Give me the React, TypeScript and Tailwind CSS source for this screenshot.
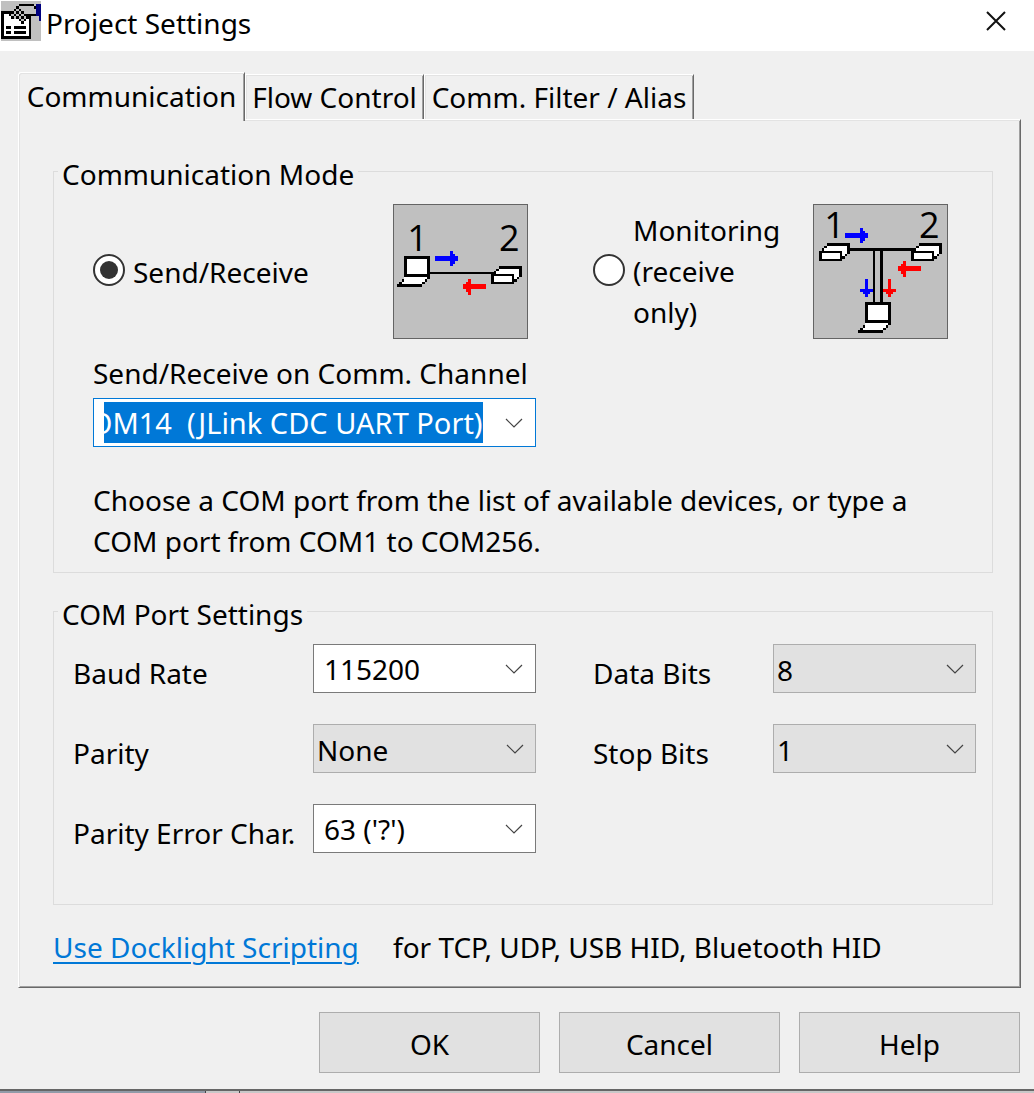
import { useEffect, useRef, type ReactNode } from "react";

function Chevron() {
  return (
    <svg viewBox="0 0 18 10" className="h-[10px] w-[18px]" fill="none" stroke="#444" strokeWidth="1.2" aria-hidden="true">
      <path d="M1 1l8 8 8-8" />
    </svg>
  );
}

function Device({ x, y }: { x: number; y: number }) {
  return (
    <g transform={`translate(${x} ${y})`}>
      <path
        fill="#000"
        d="M24 0H93V32H85V39H78V47H70V54H0V23H9V16H16V8H24Z"
      />
      <path fill="#fff" d="M24 8H85V16H78V23H16V16H24Z" />
      <path fill="#fff" d="M9 31H63V47H9Z" />
      <path fill="#fff" d="M78 16H85V32H78V39H70V23H78Z" />
    </g>
  );
}

function Laptop({ x, y }: { x: number; y: number }) {
  return (
    <g transform={`translate(${x} ${y})`}>
      <path fill="#000" d="M21 0H99V68H91V77H83V84H76V92H0V84H6V77H14V69H21Z" />
      <path fill="#fff" d="M29 8H91V54H29Z" />
      <path fill="#fff" d="M21 63H91V69H83V77H75V84H14V77H21Z" />
    </g>
  );
}

const RIGHT_ARROW = "M0 15H45V0H53V8H61V15H69V30H61V38H53V45H45V30H0Z";
const LEFT_ARROW = "M69 15H23V0H15V8H8V15H0V30H8V39H15V47H23V30H69Z";
const DOWN_ARROW = "M15 0H23V31H38V38H31V46H23V53H15V46H8V38H0V31H15Z";

function Picture({ label, children }: { label: string; children: ReactNode }) {
  return (
    <svg
      role="img"
      aria-label={label}
      viewBox="27 30 399 399"
      className="size-[135px] shrink-0 overflow-visible border border-[#646464] bg-[#c0c0c0] font-['Open_Sans',sans-serif]"
      shapeRendering="crispEdges"
    >
      {children}
    </svg>
  );
}

function SendReceivePicture() {
  return (
    <Picture label="Device 1 and device 2 connected directly">
      <text x="67" y="168" fontSize="108">1</text>
      <text x="342" y="168" fontSize="108">2</text>
      <path d="M130 231H330V237H130Z" />
      <Laptop x={36} y={183} />
      <Device x={318} y={213} />
      <path fill="#00f" transform="translate(150 168)" d={RIGHT_ARROW} />
      <path fill="#f00" transform="translate(234 252)" d={LEFT_ARROW} />
    </Picture>
  );
}

function MonitoringPicture() {
  return (
    <Picture label="Monitoring the line between device 1 and device 2">
      <text x="58" y="130" fontSize="108">1</text>
      <text x="342" y="130" fontSize="108">2</text>
      <path d="M130 159H330V167H234V325H225V167H210V325H204V167H130Z" />
      <Device x={42} y={144} />
      <Device x={318} y={144} />
      <Laptop x={159} y={321} />
      <path fill="#00f" transform="translate(120 99)" d={RIGHT_ARROW} />
      <path fill="#f00" transform="translate(279 198)" d={LEFT_ARROW} />
      <path fill="#00f" transform="translate(165 252)" d={DOWN_ARROW} />
      <path fill="#f00" transform="translate(234 252)" d={DOWN_ARROW} />
    </Picture>
  );
}

function AppIcon() {
  return (
    <svg viewBox="0 0 16 16" className="size-10 shrink-0" shapeRendering="crispEdges" aria-hidden="true">
      <path fill="#c0c0c0" d="M0 0H16V16H0Z" />
      <path fill="#000" d="M0 4H12V15H0Z" />
      <path fill="#fff" d="M1 5H11V14H1Z" />
      <path fill="#000" d="M2 10H4V11H2ZM5 10H10V11H5ZM2 12H4V13H2ZM5 12H10V13H5Z" />
      <path fill="#c0c0c0" d="M7 2H14V5H11V6H10V8H9V9H8V8H7V7H4V6H3V5H5V4H6V3H7Z" />
      <path
        fill="#000"
        d="M7 1H13V2H7ZM13 2H14V3H13ZM6 2H7V3H6ZM5 3H6V4H5ZM7 3H8V4H7ZM4 4H5V5H4ZM6 4H7V5H6ZM8 4H9V5H8ZM3 5H4V6H3ZM5 5H6V6H5ZM7 5H8V6H7ZM9 5H14V6H9ZM4 6H5V7H4ZM6 6H7V7H6ZM8 6H9V7H8ZM10 6H11V7H10ZM7 7H8V8H7ZM9 7H10V8H9ZM8 8H9V9H8Z"
      />
      <path fill="#000080" d="M14 1H16V8H15V6H14Z" />
    </svg>
  );
}

function ComboBox({ id, value, options }: { id: string; value: string; options: string[] }) {
  return (
    <div className="flex h-[49px] min-w-0 items-center border border-[#7a7a7a] bg-white pr-3 pl-[10px]">
      <input
        id={id}
        list={`${id}-options`}
        defaultValue={value}
        className="h-10 w-full min-w-0 flex-1 leading-10 outline-none [&::-webkit-calendar-picker-indicator]:hidden!"
      />
      <datalist id={`${id}-options`}>
        {options.map((o) => (
          <option key={o} value={o} />
        ))}
      </datalist>
      <button type="button" aria-label="Open list">
        <Chevron />
      </button>
    </div>
  );
}

function DropDown({ id, options }: { id: string; options: string[] }) {
  return (
    <div className="relative min-w-0">
      <select id={id} className="h-[49px] w-full appearance-none border border-[#adadad] bg-[#e1e1e1] pt-[2px] pr-10 pl-[3px] outline-none">
        {options.map((o) => (
          <option key={o}>{o}</option>
        ))}
      </select>
      <span className="pointer-events-none absolute inset-y-0 right-3 flex items-center">
        <Chevron />
      </span>
    </div>
  );
}

function Radio({ id, checked }: { id: string; checked?: boolean }) {
  return (
    <input
      id={id}
      type="radio"
      name="mode"
      defaultChecked={checked}
      className="mb-[3px] grid size-8 shrink-0 appearance-none place-content-center rounded-full border-2 border-[#333] bg-white before:size-[18px] before:rounded-full before:bg-transparent before:content-[''] checked:before:bg-[#333]"
    />
  );
}

function PortField() {
  const ref = useRef<HTMLInputElement>(null);
  useEffect(() => {
    const el = ref.current;
    if (!el) return;
    el.focus();
    el.select();
    el.scrollLeft = el.scrollWidth;
  }, []);
  return (
    <div className="flex h-[49px] w-[443px] max-w-full items-center border border-[#0078d7] bg-white pr-3 pl-[10px]">
      <input
        ref={ref}
        id="port"
        defaultValue="COM14  (JLink CDC UART Port)"
        className="h-[41px] w-[379px] min-w-0 text-[29px] leading-[41px] outline-none selection:bg-[#0078d7] selection:text-white"
      />
      <button type="button" aria-label="Open port list" className="ml-auto">
        <Chevron />
      </button>
    </div>
  );
}

const TAB =
  "border-t border-r border-l border-t-white border-r-[#696969] border-l-white whitespace-nowrap text-center shadow-[inset_1px_1px_#e3e3e3,inset_-1px_0_#a0a0a0]";
const LEGEND = "px-[4px] pt-[6px]";
const BUTTON = "h-[61px] w-[221px] border border-[#adadad] bg-[#e1e1e1] pt-[2px]";
const FIELD_LABEL = "pt-2 whitespace-nowrap";

export default function App() {
  return (
    <div className="bg-[#f0f0f0] font-['Noto_Sans',sans-serif] text-[28px] leading-10 text-black">
      <header className="flex h-[51px] items-center bg-white pb-[9px] pl-px">
        <AppIcon />
        <h1 className="ml-[5px] pt-[4px]">Project Settings</h1>
        <button type="button" aria-label="Close" className="mr-[28px] ml-auto">
          <svg viewBox="0 0 20 20" className="size-5" stroke="#111" strokeWidth="2" aria-hidden="true">
            <path d="M1 1L19 19M19 1L1 19" />
          </svg>
        </button>
      </header>

      <main className="pt-[21px] pr-[13px] pl-[18px]">
        <div role="tablist" className="flex items-end">
          <button type="button" role="tab" aria-selected="true" className={`${TAB} relative z-10 -mb-[2px] h-[49px] w-[227px] rounded-tl-[3px] bg-[#f0f0f0] pb-[2px]`}>
            Communication
          </button>
          <button type="button" role="tab" aria-selected="false" className={`${TAB} h-[45px] w-[179px]`}>
            Flow Control
          </button>
          <button type="button" role="tab" aria-selected="false" className={`${TAB} h-[45px] w-[270px]`}>
            Comm. Filter / Alias
          </button>
        </div>

        <div
          role="tabpanel"
          className="border border-t-white border-r-[#696969] border-b-[#696969] border-l-white pt-[28px] pr-[27px] pb-[20px] pl-[34px] shadow-[inset_1px_1px_#e3e3e3,inset_-1px_-1px_#a0a0a0]"
        >
          <fieldset className="border border-[#dcdcdc] pr-[19px] pb-[10px] pl-[39px]">
            <legend className={`${LEGEND} -ml-[35px]`}>Communication Mode</legend>
            <div className="mt-[10px] grid grid-cols-[300fr_200fr_220fr_160fr] items-center">
              <div className="flex items-center gap-2">
                <Radio id="send-receive" checked />
                <label htmlFor="send-receive">Send/Receive</label>
              </div>
              <SendReceivePicture />
              <div className="flex items-center gap-2">
                <Radio id="monitoring" />
                <label htmlFor="monitoring" className="w-[150px] leading-[41px]">
                  Monitoring (receive only)
                </label>
              </div>
              <MonitoringPicture />
            </div>
            <label htmlFor="port" className="mt-[14px] mb-[5px] block">
              Send/Receive on Comm. Channel
            </label>
            <PortField />
            <p className="mt-[33px] leading-[41px]">
              Choose a COM port from the list of available devices, or type a COM port from COM1 to COM256.
            </p>
          </fieldset>

          <fieldset className="mt-[15px] border border-[#dcdcdc] pr-[16px] pb-[51px] pl-[19px]">
            <legend className={`${LEGEND} -ml-[15px]`}>COM Port Settings</legend>
            <div className="mt-[10px] grid grid-cols-[minmax(0,240fr)_minmax(0,223fr)_minmax(0,57fr)_minmax(0,180fr)_minmax(0,203fr)] items-center gap-y-[31px]">
              <label htmlFor="baud" className={FIELD_LABEL}>Baud Rate</label>
              <ComboBox id="baud" value="115200" options={["9600", "57600", "115200"]} />
              <label htmlFor="data-bits" className={`${FIELD_LABEL} col-start-4`}>Data Bits</label>
              <DropDown id="data-bits" options={["8", "7"]} />
              <label htmlFor="parity" className={FIELD_LABEL}>Parity</label>
              <DropDown id="parity" options={["None", "Even", "Odd"]} />
              <label htmlFor="stop-bits" className={`${FIELD_LABEL} col-start-4`}>Stop Bits</label>
              <DropDown id="stop-bits" options={["1", "2"]} />
              <label htmlFor="parity-char" className={FIELD_LABEL}>Parity Error Char.</label>
              <ComboBox id="parity-char" value="63 ('?')" options={["63 ('?')"]} />
            </div>
          </fieldset>

          <p className="mt-[22px] grid grid-cols-[340px_1fr] whitespace-nowrap">
            <a href="#scripting" className="justify-self-start text-[#0078d7] underline decoration-2 underline-offset-4">
              Use Docklight Scripting
            </a>
            <span>for TCP, UDP, USB HID, Bluetooth HID</span>
          </p>
        </div>
      </main>

      <footer className="mt-6 flex justify-end gap-[19px] pr-[14px] pb-4">
        <button type="button" className={BUTTON}>OK</button>
        <button type="button" className={BUTTON}>Cancel</button>
        <button type="button" className={BUTTON}>Help</button>
      </footer>
      <div className="flex h-1 border-t-2 border-[#666]">
        <div className="w-[206px] border-r border-[#444] bg-[#919ba8]" />
        <div className="w-[34px] border-r border-[#444] bg-[#c8c8c8]" />
        <div className="flex-1 bg-[#c8c8c8]" />
      </div>
    </div>
  );
}
